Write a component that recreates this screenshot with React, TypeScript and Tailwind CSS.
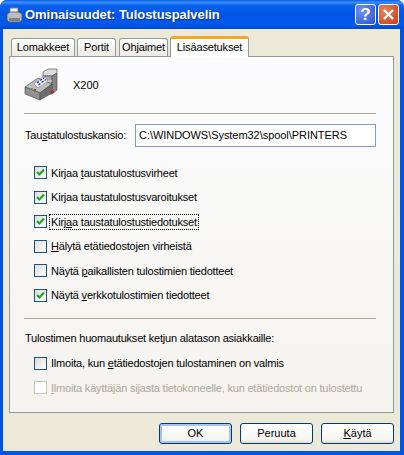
import type { ReactNode } from 'react';

const font = "font-['Liberation_Sans',Arial,sans-serif]";

interface CheckRowProps {
  label: ReactNode;
  checked?: boolean;
  disabled?: boolean;
  focused?: boolean;
}

function CheckRow({ label, checked, disabled, focused }: CheckRowProps) {
  return (
    <div className={`flex h-[13px] items-center ${disabled ? 'text-[#aca899]' : 'text-black'}`}>
      <span
        className={`flex h-[13px] w-[13px] shrink-0 items-center justify-center border ${
          disabled
            ? 'border-[#cac8bb] bg-white'
            : 'border-[#1c5180] bg-[linear-gradient(135deg,#dcdcd7,#ffffff)]'
        }`}
      >
        {checked && (
          <svg width="9" height="9" viewBox="0 0 9 9" className="block">
            <path d="M1 4l2.400 2.400L8 1.600" fill="none" stroke="#21a121" strokeWidth="2.100" />
          </svg>
        )}
      </span>
      <span className={`ml-[3px] whitespace-nowrap px-px leading-[14px] tracking-[-0.2px] ${focused ? 'outline-1 outline-dotted outline-black' : ''}`}>
        {label}
      </span>
    </div>
  );
}

function Tab({ label, width }: { label: string; width: string }) {
  return (
    <div
      className={`${width} flex h-[18px] items-center justify-center rounded-t-[3px] border border-b-0 border-[#919b9c] bg-[linear-gradient(#ffffff,#ecebe5)]`}
    >
      {label}
    </div>
  );
}

function XpButton({ children, primary }: { children: ReactNode; primary?: boolean }) {
  return (
    <button
      className={`h-[21px] w-[73px] rounded-[3px] border border-[#003c74] bg-[linear-gradient(#ffffff,#f3f3ee_85%,#dcd8ce)] text-black ${
        primary ? 'shadow-[inset_0_0_0_2px_#a9c4ec]' : ''
      }`}
    >
      {children}
    </button>
  );
}

function PrinterIcon() {
  return (
    <svg width="34" height="33" viewBox="0 0 34 33" className="block">
      {/* 뒤쪽 타워 */}
      <path d="M19 4l5-3h9v4l-5 3h-9z" fill="#dcdcdc" stroke="#555" strokeWidth="0.700" />
      <path d="M19 8h9v18h-9z" fill="#ababab" stroke="#555" strokeWidth="0.700" />
      <path d="M28 8l5-3v17l-5 4z" fill="#858585" stroke="#555" strokeWidth="0.700" />
      <path d="M20 13h8" stroke="#e4e4e4" strokeWidth="1" />
      {/* 본체 */}
      <path d="M1 19l13-9 14 6-12 9z" fill="#bdbdbd" stroke="#555" strokeWidth="0.700" />
      <path d="M1 19l15 6v7L1 26z" fill="#929292" stroke="#555" strokeWidth="0.700" />
      <path d="M16 25l12-9v9l-12 7z" fill="#6e6e6e" stroke="#555" strokeWidth="0.700" />
      {/* 용지 */}
      <path d="M10 16l10-8 4 5-10 7z" fill="#ffffff" stroke="#7a7a7a" strokeWidth="0.600" />
      <path d="M13 15l2-1.500M14.500 17l2-1.500M16 12.500l2-1.500M17.500 14.500l2-1.500M19 10.500l1.500-1M20.500 12.500l1.500-1" stroke="#2030d0" strokeWidth="1.400" />
      <rect x="7" y="20" width="2" height="2" fill="#30b040" />
      <rect x="10" y="21" width="2" height="2" fill="#d02020" />
      <rect x="27" y="23" width="3" height="2" fill="#e01010" />
    </svg>
  );
}

export default function App() {
  return (
    <div className={`${font} flex h-[455px] w-[404px] flex-col overflow-hidden rounded-t-[7px] bg-[#0054e3] text-[11px] text-black`}>
      {/* 타이틀바 */}
      <div className="flex h-[29px] shrink-0 items-center bg-[linear-gradient(#0a5ae6,#3b91fb_8%,#0a63ee_18%,#0055e5_50%,#0059ee_85%,#0048c8)] pl-[6px] pr-[5px]">
        <svg width="17" height="16" viewBox="0 0 17 16" className="block shrink-0">
          <path d="M4 1h8v5H4z" fill="#f4f4f4" stroke="#777" strokeWidth="0.800" />
          <path d="M1 7l3-2h9l3 2v6l-2 2H3l-2-2z" fill="#b9bcc0" stroke="#555" strokeWidth="0.800" />
          <path d="M3 11h11v3H3z" fill="#7e8186" />
        </svg>
        <span className="ml-[2px] flex-1 whitespace-nowrap text-[13px] font-bold leading-none tracking-[-0.05px] text-white [text-shadow:1px_1px_#0f2f8f]">
          Ominaisuudet: Tulostuspalvelin
        </span>
        <div className="flex h-[21px] w-[21px] items-center justify-center rounded-[3px] border border-white bg-[radial-gradient(circle_at_30%_30%,#6f93ee,#2c52cf)] text-[17px] font-bold leading-none text-white">
          ?
        </div>
        <div className="ml-[2px] flex h-[21px] w-[21px] items-center justify-center rounded-[3px] border border-white bg-[radial-gradient(circle_at_30%_30%,#e9825e,#c93d12)]">
          <svg width="13" height="13" viewBox="0 0 13 13" className="block">
            <path d="M2 2l9 9M11 2l-9 9" stroke="#fff" strokeWidth="2.400" />
          </svg>
        </div>
      </div>

      {/* 본문 */}
      <div className="ml-[3px] mr-[4px] mb-[4px] flex min-h-0 flex-1 flex-col bg-[#ece9d8] pl-[6px] pr-[6px] pt-[7px]">
        <div className="flex h-[20px] items-end pl-[2px] tracking-[-0.15px]">
          <Tab label="Lomakkeet" width="w-[64px]" />
          <div className="w-[2px]" />
          <Tab label="Portit" width="w-[39px]" />
          <div className="w-[3px]" />
          <Tab label="Ohjaimet" width="w-[49px]" />
          <div className="w-[2px]" />
          <div className="relative z-10 -mb-px flex h-[21px] w-[79px] items-center justify-center rounded-t-[3px] border-x border-t-[3px] border-x-[#919b9c] border-t-[#f5a623] bg-white pb-[2px]">
            Lisäasetukset
          </div>
        </div>

        <div className="flex h-[357px] flex-col border border-[#919b9c] bg-[linear-gradient(#fcfcfe,#f4f3ee)] pl-[14px] pr-[17px]">
          <div className="mt-[11px] flex h-[33px] items-center">
            <PrinterIcon />
            <span className="ml-[15px] pt-[2px]">X200</span>
          </div>
          <div className="mt-[12px] h-px bg-[#aca899]" />

          <div className="mt-[10px] flex h-[23px] items-center">
            <span className="w-[111px] whitespace-nowrap pl-px tracking-[-0.2px]">
              Tau<u>s</u>tatulostuskansio:
            </span>
            <div className="flex h-[23px] flex-1 items-center border border-[#7f9db9] bg-white pl-[3px] tracking-[-0.05px]">
              C:\WINDOWS\System32\spool\PRINTERS
            </div>
          </div>

          <div className="mt-[19px] flex flex-col gap-[11.500px] pl-[10px]">
            <CheckRow checked label={<>Kirjaa <u>t</u>austatulostusvirheet</>} />
            <CheckRow checked label={<>Kir<u>j</u>aa taustatulostusvaroitukset</>} />
            <CheckRow checked focused label={<>Kirj<u>a</u>a taustatulostustiedotukset</>} />
            <CheckRow label={<><u>H</u>älytä etätiedostojen virheistä</>} />
            <CheckRow label={<>Näytä <u>p</u>aikallisten tulostimien tiedotteet</>} />
            <CheckRow checked label={<>Näytä <u>v</u>erkkotulostimien tiedotteet</>} />
          </div>

          <div className="mt-[16px] h-px bg-[#aca899]" />
          <div className="mt-[12px] whitespace-nowrap pl-px leading-[14px] tracking-[-0.2px]">
            Tulostimen huomautukset ketjun alatason asiakkaille:
          </div>
          <div className="mt-[12px] flex flex-col gap-[11.500px] pl-[10px]">
            <CheckRow label={<>Ilmoita, kun <u>e</u>tätiedostojen tulostaminen on valmis</>} />
            <CheckRow disabled label={<><u>I</u>lmoita käyttäjän sijasta tietokoneelle, kun etätiedostot on tulostettu</>} />
          </div>
        </div>

        <div className="mt-[10px] flex justify-end gap-[8px]">
          <XpButton primary>OK</XpButton>
          <XpButton>Peruuta</XpButton>
          <XpButton><u>K</u>äytä</XpButton>
        </div>
      </div>
    </div>
  );
}
